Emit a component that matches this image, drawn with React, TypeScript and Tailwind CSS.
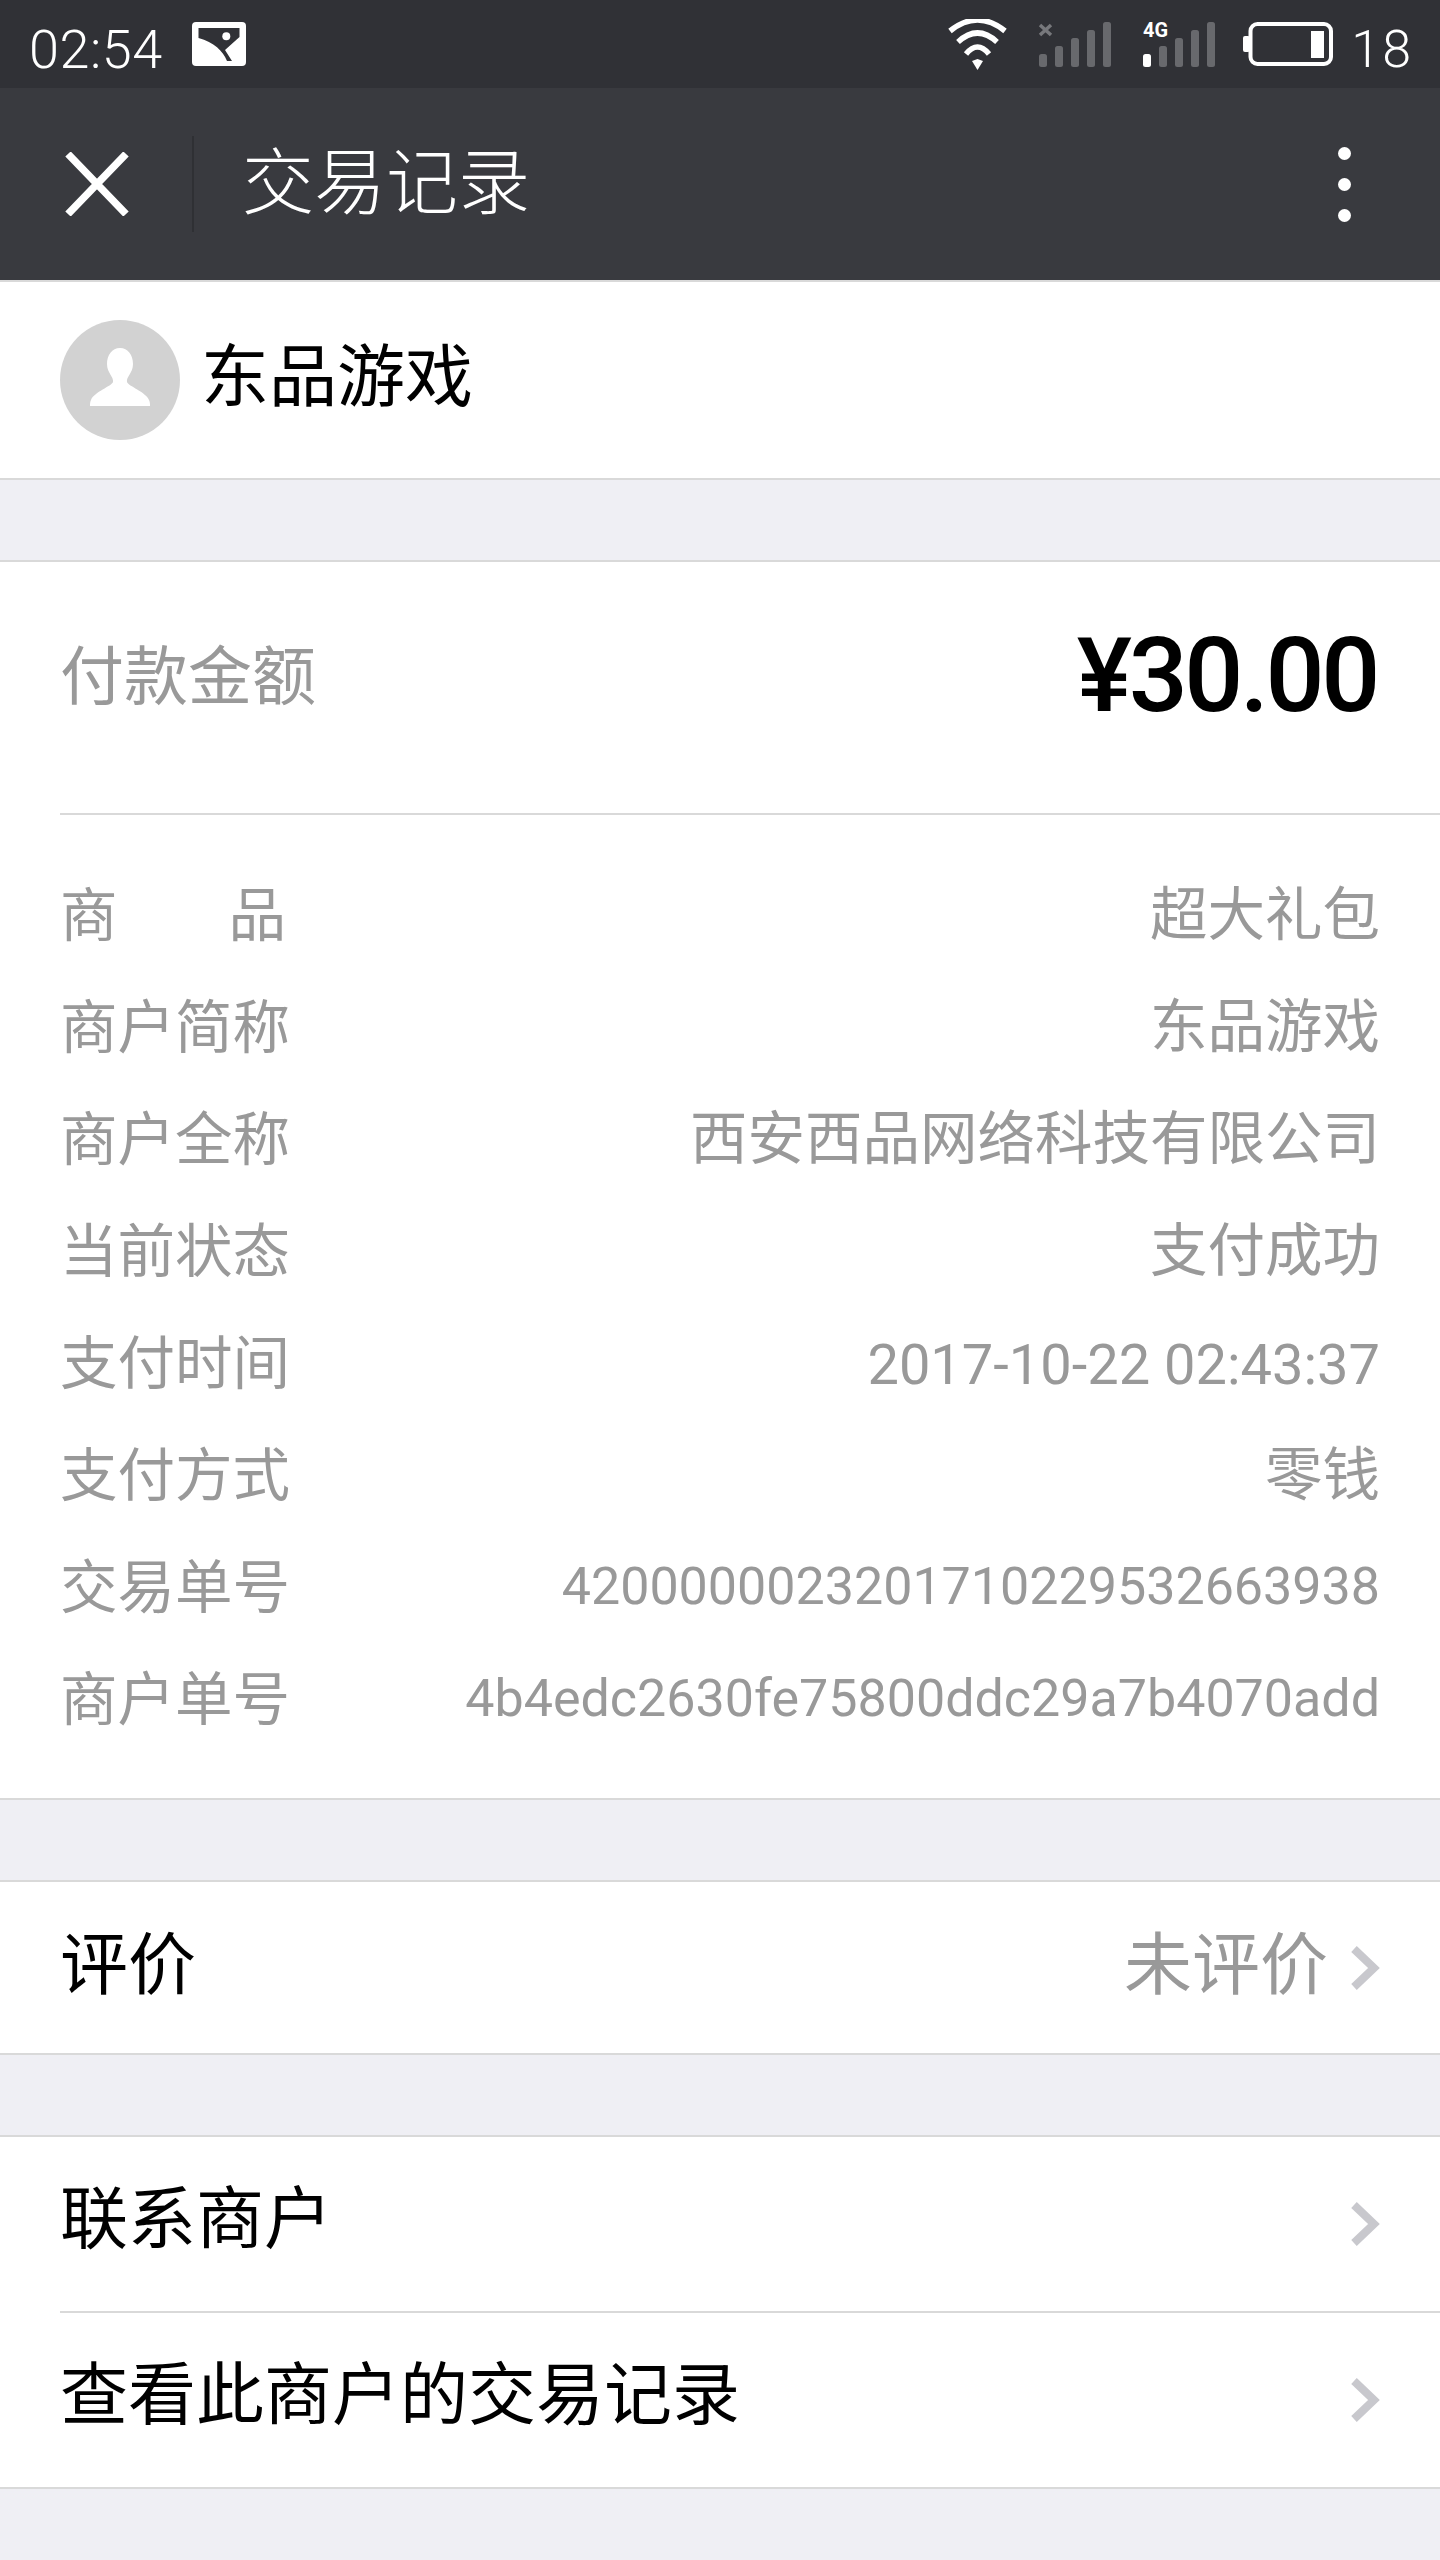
const cjk = "font-['Noto_Sans_CJK_SC','Roboto',sans-serif]";
const latin = "font-['Roboto',sans-serif]";

const rows: { label: string; value: string; cls: string }[] = [
  { label: '商户简称', value: '东品游戏', cls: 'mb-[2px]' },
  { label: '商户全称', value: '西安西品网络科技有限公司', cls: 'mb-[2px]' },
  { label: '当前状态', value: '支付成功', cls: 'mb-[2px]' },
  { label: '支付时间', value: '2017-10-22 02:43:37', cls: `${latin} mt-[9px] text-[56px]` },
  { label: '支付方式', value: '零钱', cls: 'mb-[2px]' },
  { label: '交易单号', value: '4200000023201710229532663938', cls: `${latin} mt-[6px] text-[52px]` },
  { label: '商户单号', value: '4b4edc2630fe75800ddc29a7b4070add', cls: `${latin} mt-[6px] text-[52px]` },
];

function Chevron() {
  return (
    <svg width="30" height="46" viewBox="0 0 30 46" className="shrink-0">
      <path d="M4 4 L24 23 L4 42" fill="none" stroke="#c8c8cd" strokeWidth="8" />
    </svg>
  );
}

function Signal({ tag }: { tag: 'x' | '4g' }) {
  const bars = [
    { x: 0, h: 13 },
    { x: 16, h: 21 },
    { x: 32, h: 29 },
    { x: 48, h: 37 },
    { x: 64, h: 45 },
  ];
  return (
    <svg width="74" height="45" viewBox="0 0 74 45" className="overflow-visible">
      {bars.map((b, i) => (
        <rect
          key={b.x}
          x={b.x}
          y={45 - b.h}
          width="8"
          height={b.h}
          rx="2.5"
          fill={tag === '4g' && i === 0 ? '#ffffff' : '#68696d'}
        />
      ))}
      {tag === 'x' && <path d="M1 3 L12 13 M12 3 L1 13" stroke="#77787c" strokeWidth="3.5" />}
      {tag === '4g' && (
        <text x="0" y="15" fill="#ffffff" fontSize="20" fontWeight="700" fontFamily="Roboto, sans-serif" textLength="25" lengthAdjust="spacingAndGlyphs">
          4G
        </text>
      )}
    </svg>
  );
}

function StatusBar() {
  return (
    <div className={`${latin} flex h-[88px] items-center bg-[#303136] pr-[27px] pl-[29px] font-light text-white`}>
      <span className="pt-[11px] text-[54px] leading-none tracking-[0.5px]">02:54</span>
      <svg width="54" height="44" viewBox="0 0 54 44" className="ml-[29px]">
        <rect width="54" height="44" rx="4" fill="#ffffff" />
        <path d="M6.5 6 L47.5 6 L47.5 15 L33 28 L40 39 L35 39 C31 29 22 20 6.5 16 Z" fill="#303136" />
        <circle cx="34.3" cy="14.3" r="4" fill="#ffffff" />
      </svg>
      <svg width="59" height="51" viewBox="0 0 59 51" className="ml-auto">
        <path d="M2 12 Q29.5 -10 57 12" fill="none" stroke="#fff" strokeWidth="5.5" />
        <path d="M10 23 Q29.5 5 49 23" fill="none" stroke="#fff" strokeWidth="5.5" />
        <path d="M18 35 Q29.5 21 41 35" fill="none" stroke="#fff" strokeWidth="5.5" />
        <path d="M24 42 L29.5 40 L35 42 L29.5 51 Z" fill="#fff" />
      </svg>
      <div className="ml-[32px] flex">
        <Signal tag="x" />
      </div>
      <div className="ml-[30px] flex">
        <Signal tag="4g" />
      </div>
      <svg width="90" height="44" viewBox="0 0 90 44" className="ml-[26px]">
        <rect x="0" y="14" width="7" height="16" rx="2" fill="#fff" />
        <rect x="7.5" y="2" width="80.5" height="40" rx="7" fill="none" stroke="#fff" strokeWidth="4" />
        <rect x="68" y="9" width="13" height="27" fill="#fff" />
      </svg>
      <span className="ml-[18px] pt-[11px] text-[52px] leading-none tracking-[2px]">18</span>
    </div>
  );
}

function NavBar() {
  return (
    <div className="flex h-[192px] items-center bg-[#393a3f] text-white">
      <svg width="64" height="64" viewBox="0 0 64 64" className="ml-[65px]">
        <path d="M3 2 L61 62 M61 2 L3 62" stroke="#fff" strokeWidth="7.5" />
      </svg>
      <div className="ml-[63px] h-[96px] w-[2px] bg-[#2f3034]" />
      <span className="mb-[14px] ml-[48px] text-[72px] leading-none font-light">交易记录</span>
      <div className="mr-[89px] ml-auto flex flex-col gap-[18px]">
        <span className="size-[13px] rounded-full bg-white" />
        <span className="size-[13px] rounded-full bg-white" />
        <span className="size-[13px] rounded-full bg-white" />
      </div>
    </div>
  );
}

function LinkRow({ label, value, tall }: { label: string; value?: string; tall?: boolean }) {
  return (
    <div className={`ml-[60px] flex items-center pr-[60px] ${tall ? 'h-[174px]' : 'h-[171px]'}`}>
      <span className={`text-[68px] leading-none text-black ${tall ? 'mb-[20px]' : 'mb-[16px]'}`}>{label}</span>
      <span className="ml-auto flex items-center gap-[22px]">
        {value && <span className="mb-[16px] text-[68px] leading-none text-[#999999]">{value}</span>}
        <Chevron />
      </span>
    </div>
  );
}

export default function App() {
  return (
    <div className={`${cjk} flex h-[2560px] w-[1440px] flex-col overflow-hidden bg-[#efeff4]`}>
      <StatusBar />
      <NavBar />

      <div className="flex h-[200px] items-center gap-[21px] border-y-2 border-[#d9d9d9] bg-white pl-[60px]">
        <div className="flex size-[120px] items-center justify-center rounded-full bg-[#d2d2d2]">
          <svg width="60" height="58" viewBox="0 0 60 58" className="mb-[6px]">
            <path
              d="M30 0 C38 0 43 7 43 16 C43 25 36 29 37 34 C38 38 56 44 59 52 C60 54 60 56 60 58 L0 58 C0 56 0 54 1 52 C4 44 22 38 23 34 C24 29 17 25 17 16 C17 7 22 0 30 0 Z"
              fill="#ffffff"
            />
          </svg>
        </div>
        <span className="mb-[16px] text-[68px] leading-none text-black">东品游戏</span>
      </div>

      <div className="mt-[80px] border-y-2 border-[#d9d9d9] bg-white pb-[46px]">
        <div className="ml-[60px] flex h-[253px] items-center border-b-2 border-[#d9d9d9] pr-[63px]">
          <span className="mb-[34px] text-[64px] leading-none text-[#999999]">付款金额</span>
          <span className={`${latin} mb-[24px] ml-auto text-[104px] leading-none font-medium tracking-[-3.4px] text-black`}>
            ¥30.00
          </span>
        </div>
        <div className="mt-[41px] flex flex-col px-[60px] text-[57.5px] text-[#999999]">
          <div className="flex h-[112px] items-center justify-between">
            <span className="flex w-[226px] justify-between leading-none">
              <span>商</span>
              <span>品</span>
            </span>
            <span className="mb-[2px] leading-none">超大礼包</span>
          </div>
          {rows.map((r) => (
            <div key={r.label} className="flex h-[112px] items-center justify-between">
              <span className="leading-none">{r.label}</span>
              <span className={`leading-none ${r.cls}`}>{r.value}</span>
            </div>
          ))}
        </div>
      </div>

      <div className="mt-[80px] border-y-2 border-[#d9d9d9] bg-white">
        <LinkRow label="评价" value="未评价" />
      </div>

      <div className="mt-[80px] border-y-2 border-[#d9d9d9] bg-white">
        <LinkRow label="联系商户" tall />
        <div className="ml-[60px] h-[2px] bg-[#d9d9d9]" />
        <LinkRow label="查看此商户的交易记录" tall />
      </div>
    </div>
  );
}
